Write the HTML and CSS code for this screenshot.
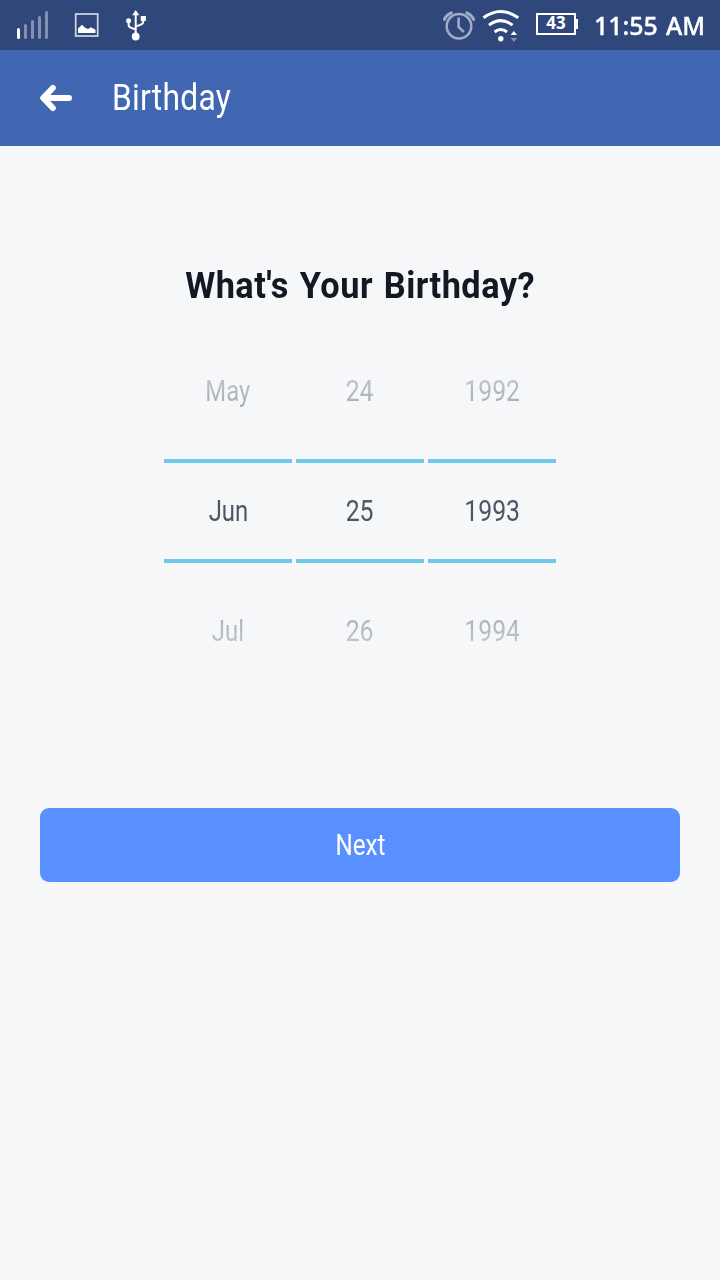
FILE: index.html
```html
<!DOCTYPE html>
<html lang="en">
<head>
<meta charset="utf-8">
<title>Birthday</title>
<link rel="stylesheet" href="styles.css">
</head>
<body>
<div class="status">
  <svg class="status-left" width="160" height="50" viewBox="0 0 160 50" aria-hidden="true">
    <g stroke="#8291b0" stroke-width="3" stroke-linecap="round">
      <path d="M18.5 29.5V37.5" stroke="#fff"/>
      <path d="M25.5 25.5V37.5M32.5 21.5V37.5M39.5 17.5V37.5M46.5 12.5V37.5"/>
    </g>
    <rect x="75.7" y="14" width="22" height="22" fill="none" stroke="#d3d9e5" stroke-width="1.7"/>
    <path d="M78 33V28.5L82 24.8L84.8 27.6L88 29L91 27.2L95.5 29.8V33Z" fill="#fff"/>
    <g fill="none" stroke="#fff" stroke-width="2">
      <path d="M135.7 14V36M128.6 21V24.5Q128.6 27 131 27.8L135.7 29.5M143.2 18V21.5Q143.2 23.8 140.8 24.6L135.7 26.6"/>
    </g>
    <g fill="#fff">
      <path d="M135.7 10L139.2 15.2H132.2Z"/>
      <circle cx="128.6" cy="20.8" r="2.5"/>
      <rect x="140.7" y="16" width="5.2" height="5"/>
      <circle cx="135.7" cy="36.5" r="3.9"/>
    </g>
  </svg>
  <div class="status-right">
    <svg width="80" height="50" viewBox="440 0 80 50" aria-hidden="true">
      <g fill="none" stroke="#a1adc7" stroke-width="2.5" stroke-linecap="round">
        <circle cx="459" cy="26.2" r="12.3"/>
        <path d="M458.6 18.5V27L463.2 31.4"/>
        <path d="M444.4 19.4Q446.4 14.9 451.3 12.8M473.6 19.4Q471.6 14.9 466.7 12.8" stroke-width="3"/>
      </g>
      <g fill="none" stroke="#fff" stroke-width="3">
        <path d="M483.5 17.7Q500.8 5.3 518.2 17.7M489 25.1Q500.8 16.2 512.6 25.1M494.6 32Q500.8 27.1 507 32"/>
      </g>
      <circle cx="500.8" cy="38.7" r="2.7" fill="#fff"/>
      <path d="M510.7 35L513.8 31L517 35Z" fill="#fff"/>
      <path d="M510.7 38L513.8 42L517 38Z" fill="#8291b0"/>
    </svg>
    <div class="battery"><span>43</span></div>
    <div class="clock"><span>11:55 AM</span></div>
  </div>
</div>
<header class="bar">
  <svg width="34" height="30" viewBox="39 83 34 30" aria-hidden="true">
    <path d="M52.8 88L43.2 98L52.8 108M44 98H69" fill="none" stroke="#fff" stroke-width="6" stroke-linecap="round" stroke-linejoin="round"/>
  </svg>
  <span class="bar-title">Birthday</span>
</header>
<main>
  <h1><span>What's Your Birthday?</span></h1>
  <div class="picker">
    <div class="column month">
      <div class="previous"><span>May</span></div>
      <div class="current"><span>Jun</span></div>
      <div class="following"><span>Jul</span></div>
    </div>
    <div class="column">
      <div class="previous"><span>24</span></div>
      <div class="current"><span>25</span></div>
      <div class="following"><span>26</span></div>
    </div>
    <div class="column">
      <div class="previous"><span>1992</span></div>
      <div class="current"><span>1993</span></div>
      <div class="following"><span>1994</span></div>
    </div>
  </div>
  <button class="next" type="button"><span>Next</span></button>
</main>
</body>
</html>
```
FILE: styles.css
```css
* { box-sizing: border-box; }
body {
  margin: 0;
  min-height: 1280px;
  background: #f5f7f9;
  font-family: Roboto, "Liberation Sans", sans-serif;
}
svg { display: block; flex: none; }
span { display: inline-block; white-space: nowrap; }
.status {
  display: flex;
  justify-content: space-between;
  height: 50px;
  background: #2f477a;
  color: #fff;
}
.status-right { display: flex; width: 280px; }
.battery {
  width: 40px;
  height: 22px;
  margin: 13px 0 0 16px;
  border: 2px solid #fff;
  position: relative;
  font: bold 17px/16px "Noto Sans", sans-serif;
  text-align: center;
}
.battery::after {
  content: "";
  position: absolute;
  left: 38px;
  top: 4px;
  width: 2px;
  height: 10px;
  background: #fff;
}
.clock {
  width: 112px;
  margin-left: 18px;
  font: 500 25.5px/51px "Noto Sans", sans-serif;
  -webkit-text-stroke: .4px #fff;
  word-spacing: 2px;
}
.clock span { transform: scaleX(.975); transform-origin: left; }
.bar {
  display: flex;
  align-items: center;
  gap: 39px;
  height: 96px;
  padding-left: 39px;
  background: #4267b2;
  color: #fff;
}
.bar-title {
  font-size: 36.5px;
  line-height: 96px;
  letter-spacing: .3px;
  transform: scaleX(.87);
  transform-origin: left;
}
main {
  display: flex;
  flex-direction: column;
  align-items: center;
  padding: 115px 40px 0;
}
h1 {
  margin: 0;
  color: #141823;
  font-size: 36.5px;
  font-weight: 700;
  line-height: 50px;
  letter-spacing: .5px;
  word-spacing: 2px;
}
h1 span { transform: scaleX(.94); }
.picker {
  display: flex;
  gap: 4px;
  height: 340px;
  margin-top: 30px;
  color: #4e5665;
  font-size: 29.5px;
}
.column { width: 128px; text-align: center; }
.column span { transform: scaleX(.84); }
.month span { transform: scaleX(.81); }
.previous { height: 118px; line-height: 100px; }
.current {
  height: 104px;
  border: solid #6dcaec;
  border-width: 4px 0;
  line-height: 97px;
}
.following { height: 118px; line-height: 136px; }
.previous span, .following span {
  line-height: 36px;
  color: transparent;
  background-clip: text;
}
.previous span { background-image: linear-gradient(#c5c8cd, #a5a9b2); }
.following span { background-image: linear-gradient(#a8acb4, #c6c9ce); }
.next {
  width: 640px;
  height: 74px;
  margin-top: 127px;
  padding: 0;
  border: 0;
  border-radius: 9px;
  background: #5890ff;
  color: #fff;
  font: 29.5px/74px Roboto, sans-serif;
}
.next span { transform: scaleX(.82); }
```
